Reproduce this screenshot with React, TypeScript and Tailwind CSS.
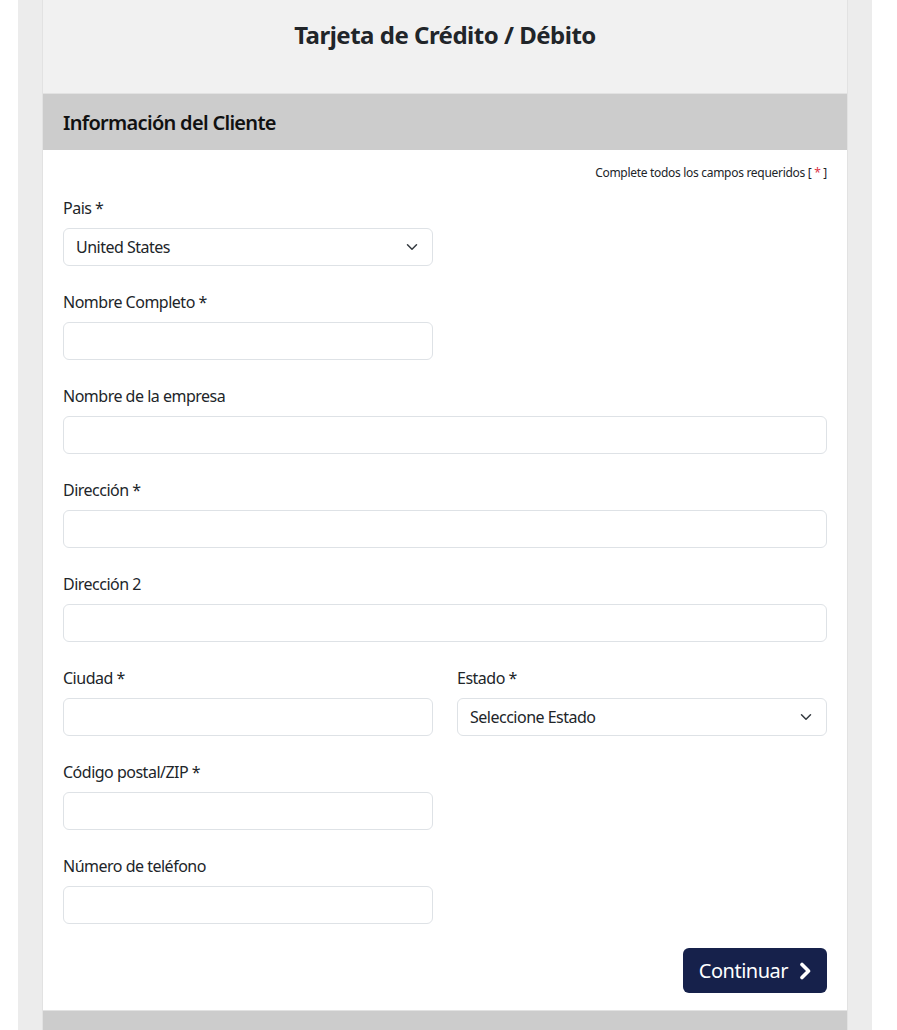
import React from "react";

const font = { fontFamily: '"Noto Sans", "Open Sans", sans-serif' };

function Chevron() {
  return (
    <svg className="absolute right-[12px] top-1/2 -translate-y-1/2 w-[16px] h-[12px]" viewBox="0 0 16 16" fill="none">
      <path d="m2 5 6 6 6-6" stroke="#343a40" strokeWidth="2" strokeLinecap="round" strokeLinejoin="round" />
    </svg>
  );
}

function Field({ label, select, value }: { label: string; select?: boolean; value?: string }) {
  return (
    <div className="flex flex-col">
      <label className="text-[16px] leading-[24px] tracking-[-0.5px] text-[#212529] mb-[8px]">{label}</label>
      <div className="relative h-[38px] rounded-[6px] border border-[#dee2e6] bg-white flex items-center px-[12px] text-[16px] tracking-[-0.5px] text-[#212529]">
        {value}
        {select && <Chevron />}
      </div>
    </div>
  );
}

export default function App() {
  return (
    <div className="min-h-[1030px] bg-white" style={font}>
      <div className="ml-[18px] w-[854px] bg-[#ececec] px-[24px] min-h-[1030px]">
        <div className="border-x border-[#e2e2e2] bg-white">
          <div className="h-[94px] bg-[#f1f1f1] border-b border-[#e2e2e2] pt-[17px] text-center">
            <h1 className="text-[24px] leading-[36px] font-bold tracking-[-0.5px] text-[#212529]">Tarjeta de Crédito / Débito</h1>
          </div>
          <div className="h-[56px] bg-[#cccccc] px-[20px] flex items-center">
            <h2 className="text-[20px] font-semibold tracking-[-0.7px] text-[#111] pt-[2px]">Información del Cliente</h2>
          </div>
          <div className="px-[20px] pt-[14px] pb-[17px]">
            <div className="text-right text-[12px] leading-[18px] tracking-[-0.3px] text-[#212529] mb-[14px]">
              Complete todos los campos requeridos [ <span className="text-[#dc3545]">*</span> ]
            </div>
            <div className="grid grid-cols-2 gap-x-[24px] gap-y-[24px]">
              <Field label="Pais *" select value="United States" />
              <div />
              <Field label="Nombre Completo *" />
              <div />
              <div className="col-span-2"><Field label="Nombre de la empresa" /></div>
              <div className="col-span-2"><Field label="Dirección *" /></div>
              <div className="col-span-2"><Field label="Dirección 2" /></div>
              <Field label="Ciudad *" />
              <Field label="Estado *" select value="Seleccione Estado" />
              <Field label="Código postal/ZIP *" />
              <div />
              <Field label="Número de teléfono" />
              <div />
            </div>
            <div className="flex justify-end mt-[24px]">
              <button className="h-[45px] rounded-[6px] bg-[#16214b] text-white text-[20px] tracking-[-0.5px] pl-[16px] pr-[15px] flex items-center gap-[10px]">
                Continuar
                <svg viewBox="0 0 14 18" className="h-[18px] w-[14px]" fill="none">
                  <path d="M4 2.5 L10.5 9 L4 15.5" stroke="white" strokeWidth="3.6" strokeLinecap="round" strokeLinejoin="round" />
                </svg>
              </button>
            </div>
          </div>
          <div className="h-[40px] bg-[#cccccc] border-t border-[#e2e2e2]" />
        </div>
      </div>
    </div>
  );
}
